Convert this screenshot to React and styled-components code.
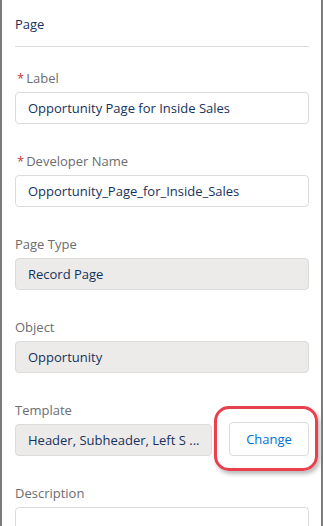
import React from "react";
import styled, { createGlobalStyle } from "styled-components";

const GlobalStyle = createGlobalStyle`
  html, body {
    margin: 0;
    padding: 0;
    background: #ffffff;
  }
  body {
    font-family: "Open Sans", "Liberation Sans", sans-serif;
    font-size: 13px;
    color: #16325c;
    overflow: hidden;
  }
`;

const Panel = styled.div`
  width: 323px;
  height: 526px;
  box-sizing: border-box;
  border-left: 2px solid #7b7b7b;
  border-right: 2px solid #7b7b7b;
  padding: 0 12px 0 13px;
  overflow: hidden;
`;

const Header = styled.div`
  height: 47px;
  box-sizing: border-box;
  padding-top: 14px;
  line-height: 20px;
  font-size: 13px;
  color: #16325c;
  border-bottom: 1px solid #dddbda;
`;

const Form = styled.div`
  display: flex;
  flex-direction: column;
  gap: 28px;
  padding-top: 22px;
`;

const Field = styled.div`
  display: flex;
  flex-direction: column;
  gap: 5px;
`;

const Label = styled.label`
  line-height: 18px;
  height: 18px;
  font-size: 13px;
  color: #6b6d70;
`;

const Required = styled.span`
  color: #c23934;
  margin: 0 2px 0 2px;
`;

const Input = styled.div`
  height: ${(p) => (p.$tall ? "60px" : "32px")};
  box-sizing: border-box;
  border: 1px solid #dddbda;
  border-radius: 4px;
  background: ${(p) => (p.$readOnly ? "#ecebea" : "#ffffff")};
  padding: 0 12px;
  line-height: 30px;
  font-size: 13px;
  color: #16325c;
  white-space: nowrap;
  overflow: hidden;
  flex: ${(p) => (p.$grow ? 1 : "none")};
  min-width: 0;
`;

const Row = styled.div`
  display: flex;
  align-items: center;
  gap: 17px;
`;

const ButtonWrap = styled.div`
  position: relative;
  margin-top: -2px;
`;

const Button = styled.button`
  width: 80px;
  height: 34px;
  box-sizing: border-box;
  border: 1px solid #dddbda;
  border-radius: 4px;
  background: #ffffff;
  color: #0070d2;
  font-family: "Open Sans", "Liberation Sans", sans-serif;
  font-size: 13px;
  cursor: pointer;
`;

const Highlight = styled.div`
  position: absolute;
  left: -15px;
  top: -16px;
  width: 104px;
  height: 65px;
  box-sizing: border-box;
  border: 3px solid #e8404c;
  border-radius: 15px;
  box-shadow: 2px 3px 4px rgba(0, 0, 0, 0.28);
  pointer-events: none;
`;

export default function App() {
  return (
    <>
      <GlobalStyle />
      <Panel>
        <Header>Page</Header>
        <Form>
          <Field>
            <Label>
              <Required>*</Required>Label
            </Label>
            <Input>Opportunity Page for Inside Sales</Input>
          </Field>
          <Field>
            <Label>
              <Required>*</Required>Developer Name
            </Label>
            <Input>Opportunity_Page_for_Inside_Sales</Input>
          </Field>
          <Field>
            <Label>Page Type</Label>
            <Input $readOnly>Record Page</Input>
          </Field>
          <Field>
            <Label>Object</Label>
            <Input $readOnly>Opportunity</Input>
          </Field>
          <Field>
            <Label>Template</Label>
            <Row>
              <Input $readOnly $grow>
                Header, Subheader, Left S ...
              </Input>
              <ButtonWrap>
                <Button>Change</Button>
                <Highlight />
              </ButtonWrap>
            </Row>
          </Field>
          <Field>
            <Label>Description</Label>
            <Input $tall />
          </Field>
        </Form>
      </Panel>
    </>
  );
}
